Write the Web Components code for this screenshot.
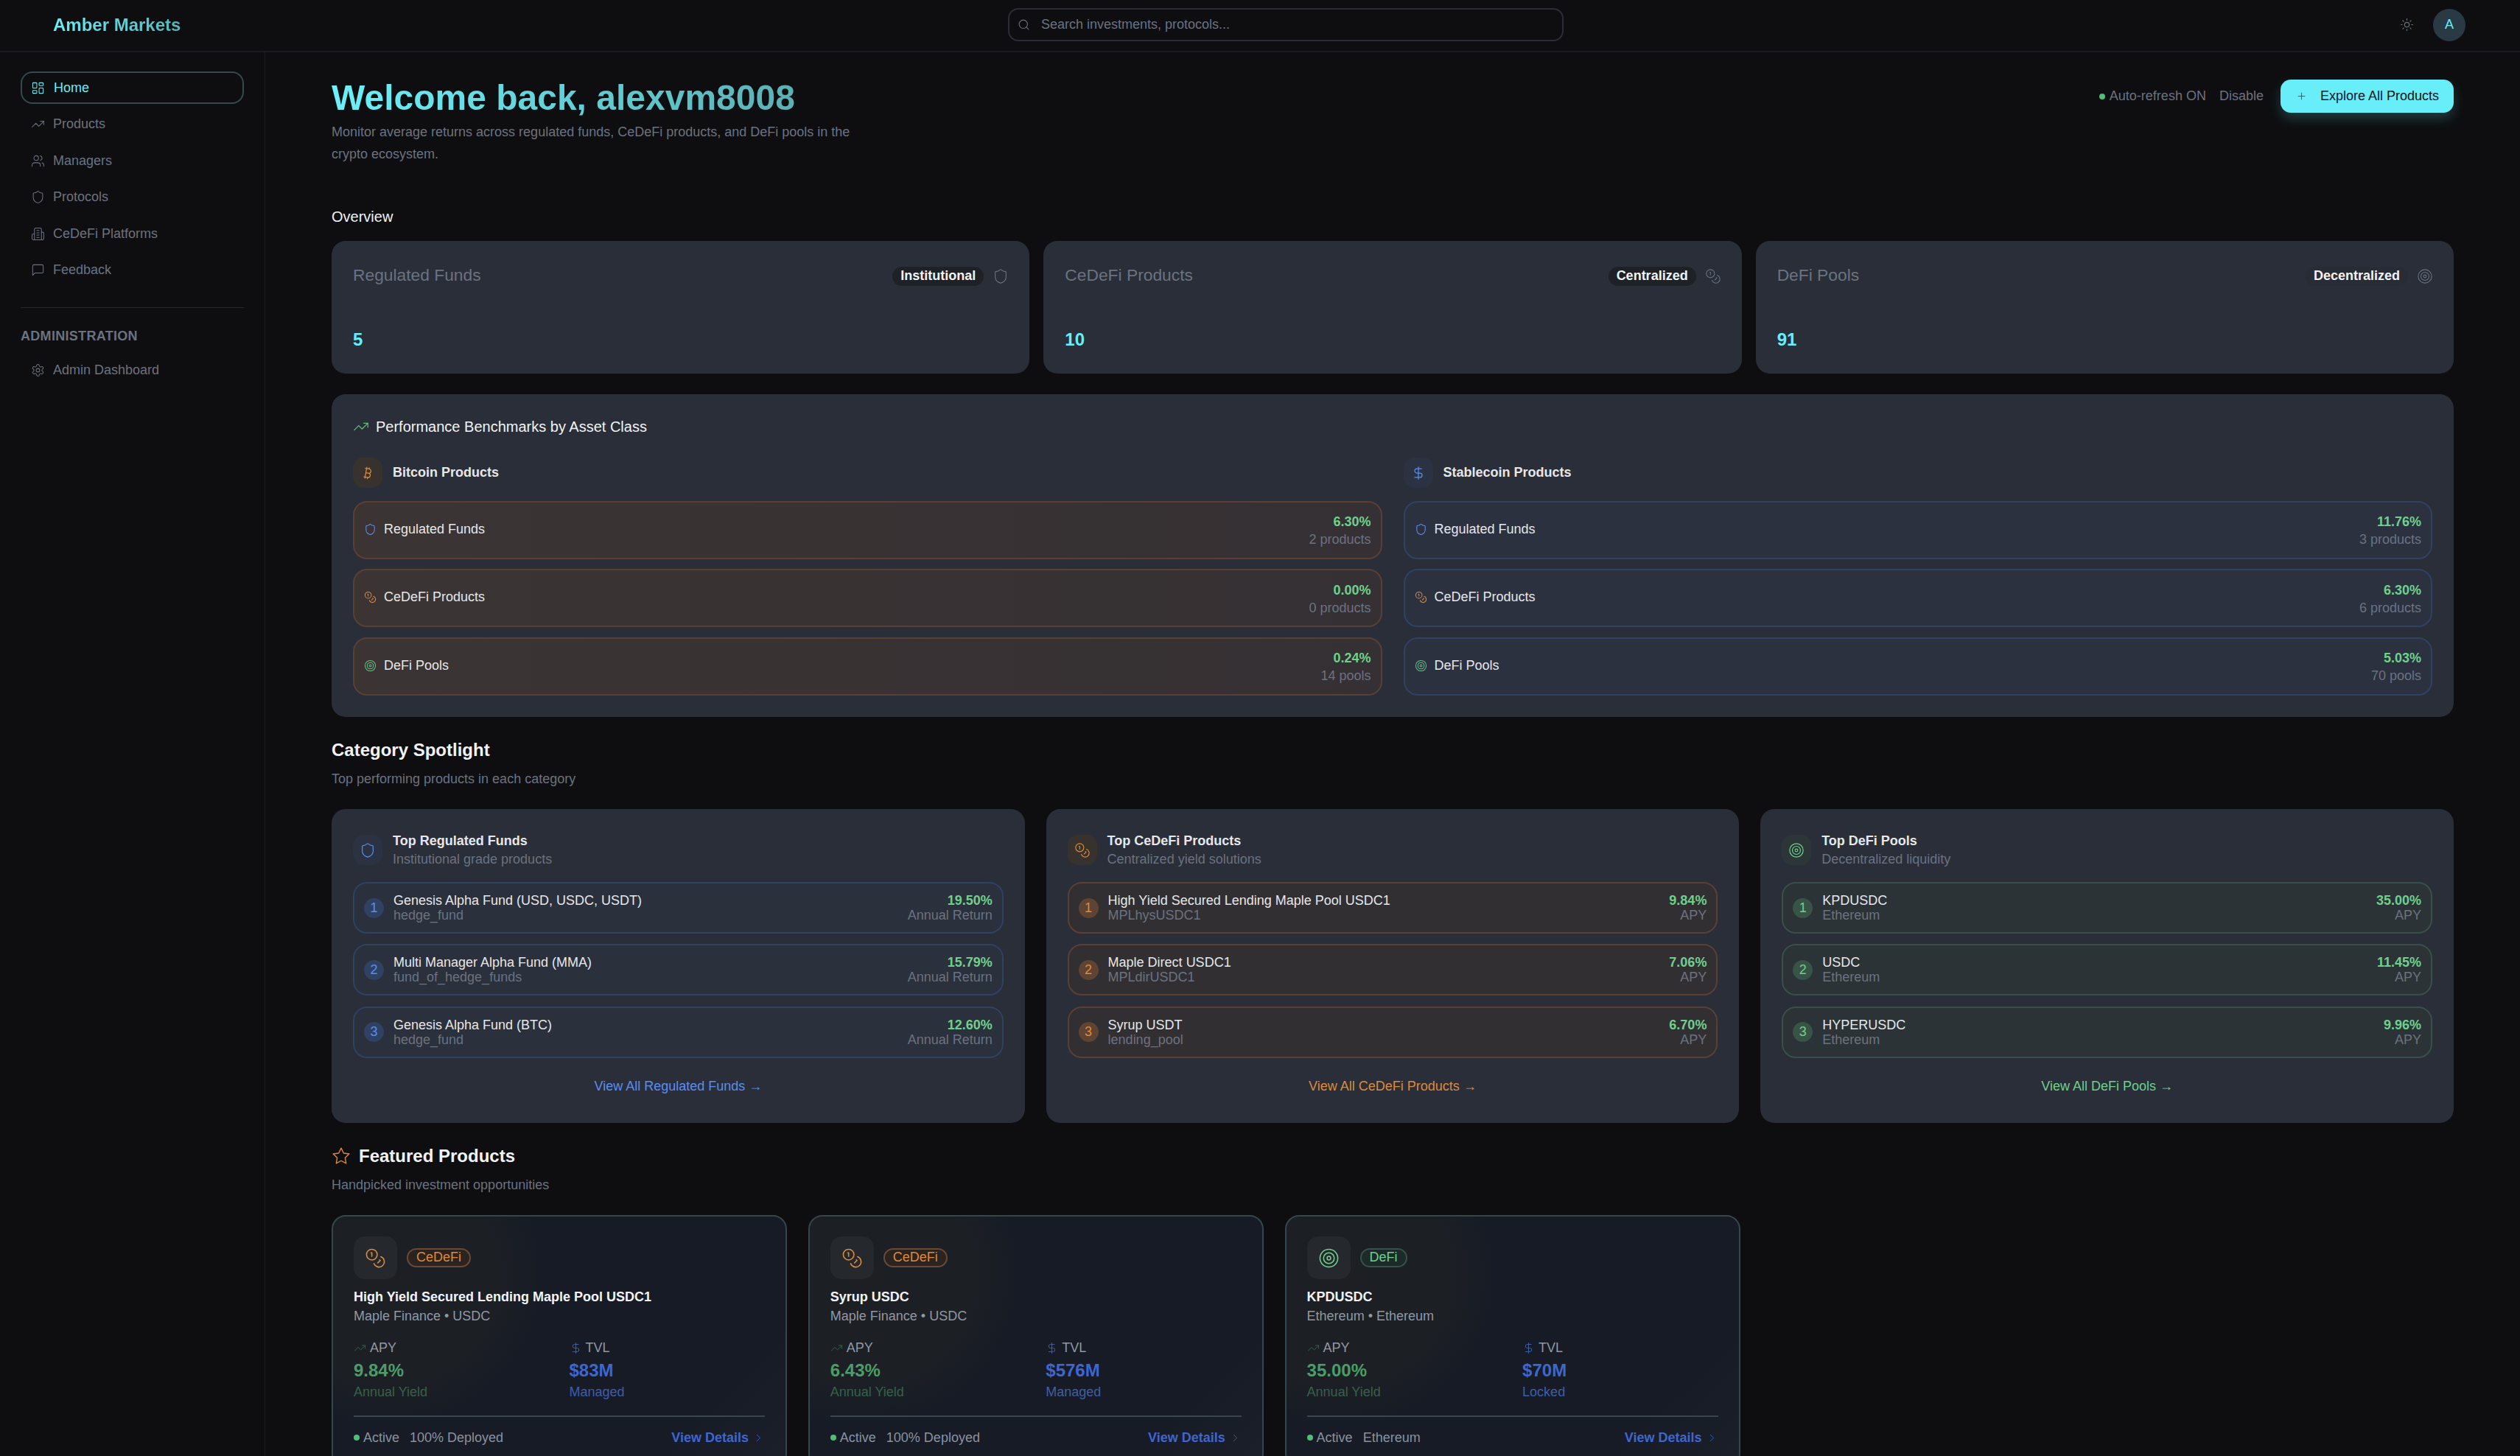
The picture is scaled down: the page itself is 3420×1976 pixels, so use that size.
<!DOCTYPE html>
<html lang="en">
<head>
<meta charset="utf-8">
<title>Amber Markets</title>
<style>
  html, body { margin: 0; height: 1976px; overflow: hidden; background: #0e0e10; }
  body { font-family: "Liberation Sans", Arial, sans-serif; color: #e5e7eb; }
  .screen { display: grid; grid-template-columns: 360px 1fr; grid-template-rows: 71px 1fr; height: 1976px; }
  am-topbar { grid-column: 1 / 3; }
</style>
</head>
<body>
<div class="screen">
  <am-topbar></am-topbar>
  <am-sidebar></am-sidebar>
  <am-main>
    <am-hero></am-hero>
    <am-overview></am-overview>
    <am-benchmarks></am-benchmarks>
    <am-spotlight></am-spotlight>
    <am-featured></am-featured>
  </am-main>
</div>

<script>
const ICONS = {
  dashboard: '<rect x="3" y="3" width="7" height="9" rx="1"/><rect x="14" y="3" width="7" height="5" rx="1"/><rect x="14" y="12" width="7" height="9" rx="1"/><rect x="3" y="16" width="7" height="5" rx="1"/>',
  trending: '<polyline points="22 7 13.5 15.5 8.5 10.5 2 17"/><polyline points="16 7 22 7 22 13"/>',
  users: '<path d="M16 21v-2a4 4 0 0 0-4-4H6a4 4 0 0 0-4 4v2"/><circle cx="9" cy="7" r="4"/><path d="M22 21v-2a4 4 0 0 0-3-3.87"/><path d="M16 3.13a4 4 0 0 1 0 7.75"/>',
  shield: '<path d="M20 13c0 5-3.5 7.5-7.66 8.95a1 1 0 0 1-.67-.01C7.5 20.5 4 18 4 13V6a1 1 0 0 1 1-1c2 0 4.5-1.2 6.24-2.72a1.17 1.17 0 0 1 1.52 0C14.51 3.81 17 5 19 5a1 1 0 0 1 1 1z"/>',
  building: '<path d="M6 22V4a2 2 0 0 1 2-2h8a2 2 0 0 1 2 2v18Z"/><path d="M6 12H4a2 2 0 0 0-2 2v6a2 2 0 0 0 2 2h2"/><path d="M18 9h2a2 2 0 0 1 2 2v9a2 2 0 0 1-2 2h-2"/><path d="M10 6h4"/><path d="M10 10h4"/><path d="M10 14h4"/><path d="M10 18h4"/>',
  message: '<path d="M21 15a2 2 0 0 1-2 2H7l-4 4V5a2 2 0 0 1 2-2h14a2 2 0 0 1 2 2z"/>',
  settings: '<path d="M12.22 2h-.44a2 2 0 0 0-2 2v.18a2 2 0 0 1-1 1.73l-.43.25a2 2 0 0 1-2 0l-.15-.08a2 2 0 0 0-2.73.73l-.22.38a2 2 0 0 0 .73 2.73l.15.1a2 2 0 0 1 1 1.72v.51a2 2 0 0 1-1 1.74l-.15.09a2 2 0 0 0-.73 2.73l.22.38a2 2 0 0 0 2.73.73l.15-.08a2 2 0 0 1 2 0l.43.25a2 2 0 0 1 1 1.73V20a2 2 0 0 0 2 2h.44a2 2 0 0 0 2-2v-.18a2 2 0 0 1 1-1.73l.43-.25a2 2 0 0 1 2 0l.15.08a2 2 0 0 0 2.73-.73l.22-.39a2 2 0 0 0-.73-2.73l-.15-.08a2 2 0 0 1-1-1.74v-.5a2 2 0 0 1 1-1.74l.15-.09a2 2 0 0 0 .73-2.73l-.22-.38a2 2 0 0 0-2.73-.73l-.15.08a2 2 0 0 1-2 0l-.43-.25a2 2 0 0 1-1-1.73V4a2 2 0 0 0-2-2z"/><circle cx="12" cy="12" r="3"/>',
  search: '<circle cx="11" cy="11" r="8"/><path d="m21 21-4.3-4.3"/>',
  sun: '<circle cx="12" cy="12" r="4"/><path d="M12 2v2"/><path d="M12 20v2"/><path d="m4.93 4.93 1.41 1.41"/><path d="m17.66 17.66 1.41 1.41"/><path d="M2 12h2"/><path d="M20 12h2"/><path d="m6.34 17.66-1.41 1.41"/><path d="m19.07 4.93-1.41 1.41"/>',
  plus: '<path d="M5 12h14"/><path d="M12 5v14"/>',
  coins: '<circle cx="8" cy="8" r="6"/><path d="M18.09 10.37A6 6 0 1 1 10.34 18"/><path d="M7 6h1v4"/><path d="m16.71 13.88.7.71-2.82 2.82"/>',
  target: '<circle cx="12" cy="12" r="10"/><circle cx="12" cy="12" r="6"/><circle cx="12" cy="12" r="2"/>',
  bitcoin: '<path d="M11.767 19.089c4.924.868 6.14-6.025 1.216-6.894m-1.216 6.894L5.86 18.047m5.908 1.042-.347 1.97m1.563-8.864c4.924.869 6.14-6.025 1.215-6.893m-1.215 6.893-3.94-.694m5.155-6.2L8.29 4.26m5.908 1.042.348-1.97M7.48 20.364l3.126-17.727"/>',
  dollar: '<line x1="12" y1="2" x2="12" y2="22"/><path d="M17 5H9.5a3.5 3.5 0 0 0 0 7h5a3.5 3.5 0 0 1 0 7H6"/>',
  star: '<polygon points="12 2 15.09 8.26 22 9.27 17 14.14 18.18 21.02 12 17.77 5.82 21.02 7 14.14 2 9.27 8.91 8.26 12 2"/>',
  chevron: '<path d="m9 18 6-6-6-6"/>'
};

const BLUE = '#5b8def', ORANGE = '#dd8a3c', GREEN = '#5fc482', TEXT = '#e5e7eb';

class AmIcon extends HTMLElement {
  connectedCallback() {
    const size = this.getAttribute('size') || 19;
    const stroke = this.getAttribute('stroke') || 2;
    this.attachShadow({ mode: 'open' });
    this.shadowRoot.innerHTML = `
      <style>
        :host { display: inline-flex; flex: none; color: ${this.getAttribute('color') || 'inherit'}; }
        svg { display: block; fill: none; stroke: currentColor; stroke-linecap: round; stroke-linejoin: round; }
      </style>
      <svg width="${size}" height="${size}" viewBox="0 0 24 24" stroke-width="${stroke}">${ICONS[this.getAttribute('name')]}</svg>`;
  }
}

class AmTopbar extends HTMLElement {
  connectedCallback() {
    this.attachShadow({ mode: 'open' });
    this.shadowRoot.innerHTML = `
      <style>
        :host { display: grid; grid-template-columns: 1296px 754px 1fr; align-items: center; height: 71px; box-sizing: border-box; border-bottom: 2px solid #1a1b1f; padding: 0 74px 2px 72px; }
        .brand { font-size: 24px; font-weight: 700; width: max-content; background: linear-gradient(90deg, #67eef8, #5bb3b8); -webkit-background-clip: text; background-clip: text; color: transparent; }
        .search { display: flex; align-items: center; gap: 15px; height: 45px; box-sizing: border-box; border: 2px solid #2a2d35; border-radius: 14px; padding: 0 11px; font-size: 18px; color: #6b7280; }
        .right { display: flex; justify-content: flex-end; align-items: center; gap: 26px; color: #6b7280; }
        .avatar { width: 44px; height: 44px; border-radius: 50%; background: #2a3a44; color: #67eef8; display: flex; align-items: center; justify-content: center; font-size: 18px; }
      </style>
      <div class="brand">Amber Markets</div>
      <div class="search"><am-icon name="search" size="17" stroke="1.5"></am-icon>Search investments, protocols...</div>
      <div class="right"><am-icon name="sun" size="19" stroke="1.5"></am-icon><div class="avatar">A</div></div>`;
  }
}

class AmNavItem extends HTMLElement {
  connectedCallback() {
    const active = this.hasAttribute('active');
    this.attachShadow({ mode: 'open' });
    this.shadowRoot.innerHTML = `
      <style>
        :host { display: flex; align-items: center; gap: ${active ? 12 : 11}px; height: 44px; box-sizing: border-box; padding: 0 12px; border-radius: 16px; font-size: 18px; color: ${active ? '#67eef8' : '#6b7280'}; border: 2px solid ${active ? '#36494f' : 'transparent'}; }
      </style>
      <am-icon name="${this.getAttribute('icon')}" size="19" stroke="1.3"></am-icon><slot></slot>`;
  }
}

class AmSidebar extends HTMLElement {
  connectedCallback() {
    this.attachShadow({ mode: 'open' });
    this.shadowRoot.innerHTML = `
      <style>
        :host { display: block; border-right: 1px solid #1a1b1f; padding: 26px 28px 0; box-sizing: border-box; }
        nav { display: flex; flex-direction: column; gap: 5.5px; }
        hr { border: 0; border-top: 1px solid #26282d; margin: 28px 0 28px; }
        .cap { font-size: 18px; font-weight: 700; letter-spacing: .3px; color: #6b7280; line-height: 20px; margin-bottom: 15px; }
      </style>
      <nav>
        <am-nav-item icon="dashboard" active>Home</am-nav-item>
        <am-nav-item icon="trending">Products</am-nav-item>
        <am-nav-item icon="users">Managers</am-nav-item>
        <am-nav-item icon="shield">Protocols</am-nav-item>
        <am-nav-item icon="building">CeDeFi Platforms</am-nav-item>
        <am-nav-item icon="message">Feedback</am-nav-item>
      </nav>
      <hr>
      <div class="cap">ADMINISTRATION</div>
      <am-nav-item icon="settings">Admin Dashboard</am-nav-item>`;
  }
}

class AmMain extends HTMLElement {
  connectedCallback() {
    this.attachShadow({ mode: 'open' });
    this.shadowRoot.innerHTML = `
      <style>:host { display: block; padding: 36px 90px 0; min-width: 0; }</style>
      <slot></slot>`;
  }
}

class AmHero extends HTMLElement {
  connectedCallback() {
    this.attachShadow({ mode: 'open' });
    this.shadowRoot.innerHTML = `
      <style>
        :host { display: flex; justify-content: space-between; align-items: flex-start; }
        h1 { margin: 0; font-size: 48px; line-height: 52px; font-weight: 700; width: max-content; background: linear-gradient(90deg, #6cf0f9, #5cb0b4); -webkit-background-clip: text; background-clip: text; color: transparent; }
        p { margin: 5px 0 0; width: 730px; font-size: 18px; line-height: 30px; color: #6b7280; }
        .actions { display: flex; align-items: center; font-size: 18px; color: #6b7280; margin-top: 1px; }
        .dot { width: 8px; height: 8px; border-radius: 50%; background: #4fbf76; margin-right: 6px; }
        .off { margin: 0 23px 0 18px; }
        .btn { display: flex; align-items: center; gap: 18px; height: 45px; box-sizing: border-box; padding: 0 20px 0 21px; border-radius: 14px; background: #67eef8; color: #10151a; box-shadow: 0 8px 16px rgba(103, 238, 248, .2); }
        .btn am-icon { color: #3a6068; }
      </style>
      <div>
        <h1>Welcome back, alexvm8008</h1>
        <p>Monitor average returns across regulated funds, CeDeFi products, and DeFi pools in the crypto ecosystem.</p>
      </div>
      <div class="actions">
        <span class="dot"></span><span>Auto-refresh ON</span><span class="off">Disable</span>
        <div class="btn"><am-icon name="plus" size="15" stroke="1.6"></am-icon>Explore All Products</div>
      </div>`;
  }
}

class AmStatCard extends HTMLElement {
  connectedCallback() {
    this.attachShadow({ mode: 'open' });
    this.shadowRoot.innerHTML = `
      <style>
        :host { display: block; height: 180px; box-sizing: border-box; padding: 30px 28px 0 29px; border-radius: 19px; background: #292e38; }
        .top { display: flex; align-items: center; height: 36px; }
        .name { flex: 1; font-size: 22.8px; color: #6b7280; margin-top: -4px; }
        .badge { height: 26px; padding: 0 11px; border-radius: 13px; background: ${this.getAttribute('badgebg')}; color: #f1f3f6; font-size: 18px; font-weight: 700; line-height: 25px; }
        am-icon { margin-left: 12px; color: #6b7280; }
        .num { margin-top: 53px; font-size: 24px; line-height: 30px; font-weight: 700; color: #67eef8; }
      </style>
      <div class="top">
        <div class="name">${this.getAttribute('name')}</div>
        <div class="badge">${this.getAttribute('badge')}</div>
        <am-icon name="${this.getAttribute('icon')}" size="22" stroke="1.2"></am-icon>
      </div>
      <div class="num">${this.getAttribute('value')}</div>`;
  }
}

class AmOverview extends HTMLElement {
  connectedCallback() {
    this.attachShadow({ mode: 'open' });
    this.shadowRoot.innerHTML = `
      <style>
        :host { display: block; margin-top: 56px; }
        h2 { margin: 0 0 19px; font-size: 20px; line-height: 28px; font-weight: 400; color: #f1f3f6; }
        .grid { display: grid; grid-template-columns: repeat(3, 1fr); gap: 19px; }
      </style>
      <h2>Overview</h2>
      <div class="grid">
        <am-stat-card name="Regulated Funds" badge="Institutional" icon="shield" value="5" badgebg="#1e2126"></am-stat-card>
        <am-stat-card name="CeDeFi Products" badge="Centralized" icon="coins" value="10" badgebg="#1e2126"></am-stat-card>
        <am-stat-card name="DeFi Pools" badge="Decentralized" icon="target" value="91" badgebg="#282c35"></am-stat-card>
      </div>`;
  }
}

class AmBenchRow extends HTMLElement {
  connectedCallback() {
    const btc = this.getAttribute('tone') === 'btc';
    this.attachShadow({ mode: 'open' });
    this.shadowRoot.innerHTML = `
      <style>
        :host { display: flex; align-items: center; height: 79px; box-sizing: border-box; padding: 0 13px; border-radius: 19px;
          border: 2px solid ${btc ? '#5a4034' : '#2f4263'}; background: ${btc ? 'linear-gradient(90deg, #3b3433, #353033)' : '#2c3140'}; }
        .name { flex: 1; display: flex; align-items: center; gap: 10px; font-size: 18px; color: ${TEXT}; margin-top: -2px; }
        .right { text-align: right; padding-top: 2px; }
        .val { font-size: 18px; line-height: 24px; font-weight: 700; color: #6fd08c; }
        .sub { font-size: 18px; line-height: 24px; color: #6b7280; }
      </style>
      <div class="name"><am-icon name="${this.getAttribute('icon')}" size="17" color="${this.getAttribute('color')}" stroke="1.5"></am-icon>${this.getAttribute('name')}</div>
      <div class="right"><div class="val">${this.getAttribute('value')}</div><div class="sub">${this.getAttribute('sub')}</div></div>`;
  }
}

class AmBenchCol extends HTMLElement {
  connectedCallback() {
    const btc = this.getAttribute('tone') === 'btc';
    this.attachShadow({ mode: 'open' });
    this.shadowRoot.innerHTML = `
      <style>
        :host { display: flex; flex-direction: column; gap: 13.4px; }
        .head { display: flex; align-items: center; gap: 14px; height: 41px; margin-bottom: 4.6px; font-size: 18px; font-weight: 700; color: ${TEXT}; }
        .ico { width: 40px; height: 41px; border-radius: 14px; display: flex; align-items: center; justify-content: center; background: ${btc ? '#38322f' : '#2b3241'}; }
      </style>
      <div class="head">
        <div class="ico"><am-icon name="${btc ? 'bitcoin' : 'dollar'}" size="20" color="${btc ? ORANGE : BLUE}" stroke="1.5"></am-icon></div>
        ${this.getAttribute('title')}
      </div>
      <slot></slot>`;
  }
}

class AmBenchmarks extends HTMLElement {
  connectedCallback() {
    const rows = (tone, vals) => [
      ['Regulated Funds', 'shield', BLUE],
      ['CeDeFi Products', 'coins', ORANGE],
      ['DeFi Pools', 'target', GREEN]
    ].map((r, i) => `<am-bench-row tone="${tone}" name="${r[0]}" icon="${r[1]}" color="${r[2]}" value="${vals[i][0]}" sub="${vals[i][1]}"></am-bench-row>`).join('');
    this.attachShadow({ mode: 'open' });
    this.shadowRoot.innerHTML = `
      <style>
        :host { display: block; margin-top: 28px; height: 438px; box-sizing: border-box; padding: 29px; border-radius: 19px; background: #292e38; }
        .title { display: flex; align-items: center; gap: 9px; height: 30px; font-size: 20px; color: #f1f3f6; margin-bottom: 27px; }
        .cols { display: grid; grid-template-columns: 1fr 1fr; gap: 29px; }
      </style>
      <div class="title"><am-icon name="trending" size="22" color="${GREEN}" stroke="1.3"></am-icon>Performance Benchmarks by Asset Class</div>
      <div class="cols">
        <am-bench-col tone="btc" title="Bitcoin Products">${rows('btc', [['6.30%', '2 products'], ['0.00%', '0 products'], ['0.24%', '14 pools']])}</am-bench-col>
        <am-bench-col tone="usd" title="Stablecoin Products">${rows('usd', [['11.76%', '3 products'], ['6.30%', '6 products'], ['5.03%', '70 pools']])}</am-bench-col>
      </div>`;
  }
}

const TONES = {
  blue: { fg: BLUE, rowbg: '#2a303c', border: '#2f4263', num: '#2f4263', ico: '#2b3241', icon: 'shield' },
  orange: { fg: ORANGE, rowbg: '#322f33', border: '#5a4034', num: '#5f4434', ico: '#38322f', icon: 'coins' },
  green: { fg: '#6fd08c', rowbg: '#2b3337', border: '#39504a', num: '#385447', ico: '#2c3538', icon: 'target' }
};

class AmSpotRow extends HTMLElement {
  connectedCallback() {
    const t = TONES[this.getAttribute('tone')];
    this.attachShadow({ mode: 'open' });
    this.shadowRoot.innerHTML = `
      <style>
        :host { display: flex; align-items: center; gap: 13px; height: 70px; box-sizing: border-box; padding: 0 13px; border-radius: 19px; border: 2px solid ${t.border}; background: ${t.rowbg}; }
        .n { width: 27px; height: 27px; border-radius: 50%; background: ${t.num}; color: ${t.fg}; display: flex; align-items: center; justify-content: center; font-size: 18px; }
        .main { flex: 1; }
        .a { font-size: 18px; line-height: 20px; color: ${TEXT}; }
        .b { font-size: 18px; line-height: 20px; color: #6b7280; }
        .right { text-align: right; }
        .v { font-size: 18px; line-height: 20px; font-weight: 700; color: #6fd08c; }
      </style>
      <div class="n">${this.getAttribute('n')}</div>
      <div class="main"><div class="a">${this.getAttribute('name')}</div><div class="b">${this.getAttribute('sub')}</div></div>
      <div class="right"><div class="v">${this.getAttribute('value')}</div><div class="b">${this.getAttribute('unit')}</div></div>`;
  }
}

class AmSpotCard extends HTMLElement {
  connectedCallback() {
    const t = TONES[this.getAttribute('tone')];
    this.attachShadow({ mode: 'open' });
    this.shadowRoot.innerHTML = `
      <style>
        :host { display: block; height: 426px; box-sizing: border-box; padding: 35px 29px 0; border-radius: 19px; background: #292e38; }
        .head { display: flex; align-items: center; gap: 14px; height: 41px; }
        .ico { width: 40px; height: 41px; border-radius: 14px; display: flex; align-items: center; justify-content: center; background: ${t.ico}; }
        .t { font-size: 18px; line-height: 22px; font-weight: 700; color: ${TEXT}; }
        .s { font-size: 18px; line-height: 22px; color: #6b7280; margin-top: 3px; }
        .rows { display: flex; flex-direction: column; gap: 14.4px; margin-top: 23px; }
        .all { margin-top: 26px; text-align: center; font-size: 18px; line-height: 24px; color: ${t.fg}; }
      </style>
      <div class="head">
        <div class="ico"><am-icon name="${t.icon}" size="22" color="${t.fg}" stroke="1.3"></am-icon></div>
        <div><div class="t">${this.getAttribute('title')}</div><div class="s">${this.getAttribute('sub')}</div></div>
      </div>
      <div class="rows"><slot></slot></div>
      <div class="all">${this.getAttribute('link')} →</div>`;
  }
}

class AmSpotlight extends HTMLElement {
  connectedCallback() {
    const rows = (tone, unit, list) => list.map((r, i) => `<am-spot-row tone="${tone}" n="${i + 1}" name="${r[0]}" sub="${r[1]}" value="${r[2]}" unit="${unit}"></am-spot-row>`).join('');
    this.attachShadow({ mode: 'open' });
    this.shadowRoot.innerHTML = `
      <style>
        :host { display: block; margin-top: 29px; }
        h2 { margin: 0; font-size: 24px; line-height: 32px; font-weight: 700; color: #f1f3f6; }
        p { margin: 11px 0 29px; font-size: 18px; line-height: 24px; color: #6b7280; }
        .grid { display: grid; grid-template-columns: repeat(3, 1fr); gap: 28.8px; }
      </style>
      <h2>Category Spotlight</h2>
      <p>Top performing products in each category</p>
      <div class="grid">
        <am-spot-card tone="blue" title="Top Regulated Funds" sub="Institutional grade products" link="View All Regulated Funds">${rows('blue', 'Annual Return', [
          ['Genesis Alpha Fund (USD, USDC, USDT)', 'hedge_fund', '19.50%'],
          ['Multi Manager Alpha Fund (MMA)', 'fund_of_hedge_funds', '15.79%'],
          ['Genesis Alpha Fund (BTC)', 'hedge_fund', '12.60%']])}</am-spot-card>
        <am-spot-card tone="orange" title="Top CeDeFi Products" sub="Centralized yield solutions" link="View All CeDeFi Products">${rows('orange', 'APY', [
          ['High Yield Secured Lending Maple Pool USDC1', 'MPLhysUSDC1', '9.84%'],
          ['Maple Direct USDC1', 'MPLdirUSDC1', '7.06%'],
          ['Syrup USDT', 'lending_pool', '6.70%']])}</am-spot-card>
        <am-spot-card tone="green" title="Top DeFi Pools" sub="Decentralized liquidity" link="View All DeFi Pools">${rows('green', 'APY', [
          ['KPDUSDC', 'Ethereum', '35.00%'],
          ['USDC', 'Ethereum', '11.45%'],
          ['HYPERUSDC', 'Ethereum', '9.96%']])}</am-spot-card>
      </div>`;
  }
}

class AmFeatCard extends HTMLElement {
  connectedCallback() {
    const defi = this.getAttribute('kind') === 'DeFi';
    const fg = defi ? '#6fd08c' : ORANGE;
    this.attachShadow({ mode: 'open' });
    this.shadowRoot.innerHTML = `
      <style>
        :host { display: block; box-sizing: border-box; padding: 27px 28px 27px; border-radius: 19px; border: 2px solid #36464f; background: radial-gradient(ellipse 220px 210px at 70px 80px, #1d1f23 0%, #1c1f24 70%, rgba(28, 31, 36, 0) 100%), linear-gradient(135deg, #161b26 0%, #161b26 78%, #1a1f2a 100%); }
        .top { display: flex; align-items: center; gap: 13px; }
        .ico { width: 59px; height: 58px; border-radius: 15px; background: #25292d; display: flex; align-items: center; justify-content: center; color: ${fg}; }
        .tag { height: 26px; box-sizing: border-box; padding: 0 11px; border: 2px solid ${defi ? '#39504a' : '#6a4a33'}; border-radius: 13px; font-size: 18px; line-height: 21px; color: ${fg}; background: ${defi ? '#1d2a2a' : '#2a2320'}; }
        .t { margin-top: 12px; font-size: 18px; line-height: 24px; font-weight: 700; color: #f1f3f6; }
        .s { margin-top: 2px; font-size: 18px; line-height: 24px; color: #9098a4; }
        .stats { display: grid; grid-template-columns: 1fr 1fr; gap: 27px; margin-top: 19px; }
        .lab { display: flex; align-items: center; gap: 5px; font-size: 18px; line-height: 24px; color: #9098a4; }
        .val { margin-top: 3px; font-size: 24px; line-height: 32px; font-weight: 700; }
        .cap { margin-top: 2px; font-size: 18px; line-height: 22px; }
        .g .val { color: #4a9d68; } .g .cap { color: #36614b; }
        .b .val { color: #3f66cf; } .b .cap { color: #3f5ea8; }
        .foot { display: flex; align-items: center; margin-top: 21px; border-top: 2px solid #36464f; padding-top: 16px; font-size: 18px; line-height: 24px; color: #8a92a0; }
        .dot { width: 8px; height: 8px; border-radius: 50%; background: #4fbf76; margin-right: 5px; }
        .dep { margin-left: 14px; flex: 1; }
        .go { display: flex; align-items: center; gap: 5px; font-weight: 700; color: #3f66cf; }
      </style>
      <div class="top">
        <div class="ico"><am-icon name="${defi ? 'target' : 'coins'}" size="29" stroke="1.3"></am-icon></div>
        <div class="tag">${this.getAttribute('kind')}</div>
      </div>
      <div class="t">${this.getAttribute('title')}</div>
      <div class="s">${this.getAttribute('sub')}</div>
      <div class="stats">
        <div class="g">
          <div class="lab"><am-icon name="trending" size="17" color="#36614b" stroke="1.4"></am-icon>APY</div>
          <div class="val">${this.getAttribute('apy')}</div>
          <div class="cap">Annual Yield</div>
        </div>
        <div class="b">
          <div class="lab"><am-icon name="dollar" size="17" color="#3f5ea8" stroke="1.4"></am-icon>TVL</div>
          <div class="val">${this.getAttribute('tvl')}</div>
          <div class="cap">${this.getAttribute('tvlcap')}</div>
        </div>
      </div>
      <div class="foot">
        <span class="dot"></span>Active
        <span class="dep">${this.getAttribute('note')}</span>
        <span class="go">View Details <am-icon name="chevron" size="17" stroke="1.2"></am-icon></span>
      </div>`;
  }
}

class AmFeatured extends HTMLElement {
  connectedCallback() {
    this.attachShadow({ mode: 'open' });
    this.shadowRoot.innerHTML = `
      <style>
        :host { display: block; margin-top: 29px; }
        h2 { display: flex; align-items: center; gap: 11px; margin: 0; font-size: 24px; line-height: 32px; font-weight: 700; color: #f1f3f6; }
        p { margin: 11px 0 29px; font-size: 18px; line-height: 24px; color: #6b7280; }
        .grid { display: grid; grid-template-columns: repeat(3, 618px); gap: 28.8px; }
      </style>
      <h2><am-icon name="star" size="26" color="${ORANGE}" stroke="1.3"></am-icon>Featured Products</h2>
      <p>Handpicked investment opportunities</p>
      <div class="grid">
        <am-feat-card kind="CeDeFi" title="High Yield Secured Lending Maple Pool USDC1" sub="Maple Finance • USDC" apy="9.84%" tvl="$83M" tvlcap="Managed" note="100% Deployed"></am-feat-card>
        <am-feat-card kind="CeDeFi" title="Syrup USDC" sub="Maple Finance • USDC" apy="6.43%" tvl="$576M" tvlcap="Managed" note="100% Deployed"></am-feat-card>
        <am-feat-card kind="DeFi" title="KPDUSDC" sub="Ethereum • Ethereum" apy="35.00%" tvl="$70M" tvlcap="Locked" note="Ethereum"></am-feat-card>
      </div>`;
  }
}

customElements.define('am-icon', AmIcon);
customElements.define('am-topbar', AmTopbar);
customElements.define('am-nav-item', AmNavItem);
customElements.define('am-sidebar', AmSidebar);
customElements.define('am-main', AmMain);
customElements.define('am-hero', AmHero);
customElements.define('am-stat-card', AmStatCard);
customElements.define('am-overview', AmOverview);
customElements.define('am-bench-row', AmBenchRow);
customElements.define('am-bench-col', AmBenchCol);
customElements.define('am-benchmarks', AmBenchmarks);
customElements.define('am-spot-row', AmSpotRow);
customElements.define('am-spot-card', AmSpotCard);
customElements.define('am-spotlight', AmSpotlight);
customElements.define('am-feat-card', AmFeatCard);
customElements.define('am-featured', AmFeatured);
</script>
</body>
</html>
